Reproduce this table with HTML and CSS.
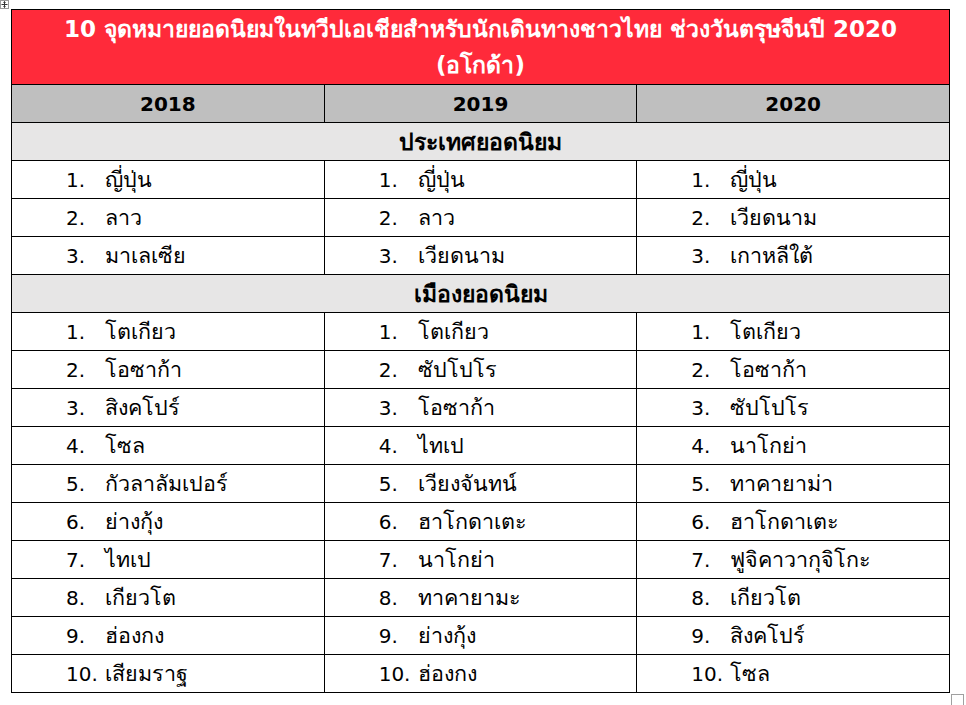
FILE: index.html
```html
<!DOCTYPE html>
<html lang="th">
<head>
<meta charset="utf-8">
<link rel="stylesheet" href="styles.css">
</head>
<body>
<div class="page">
  <div class="move-handle">
    <svg width="9" height="9" viewBox="0 0 9 9"><rect x="0.5" y="0.5" width="8" height="8" fill="#fff" stroke="#9a9a9a"/><path d="M4.5 1.5v6M1.5 4.5h6" stroke="#333" stroke-width="1"/><path d="M4.5 1.5l-1.2 1.2M4.5 1.5l1.2 1.2M4.5 7.5l-1.2-1.2M4.5 7.5l1.2-1.2" stroke="#333" stroke-width="0.8"/></svg>
  </div>
  <table class="tbl">
    <colgroup><col class="c"><col class="c"><col class="c"></colgroup>
    <tr class="title"><td colspan="3">10 จุดหมายยอดนิยมในทวีปเอเชียสำหรับนักเดินทางชาวไทย ช่วงวันตรุษจีนปี 2020<br>(อโกด้า)</td></tr>
    <tr class="years"><td>2018</td><td>2019</td><td>2020</td></tr>
    <tr class="section"><td colspan="3">ประเทศยอดนิยม</td></tr>
    <tr class="row"><td><span class="n">1.</span><span class="t">ญี่ปุ่น</span></td><td><span class="n">1.</span><span class="t">ญี่ปุ่น</span></td><td><span class="n">1.</span><span class="t">ญี่ปุ่น</span></td></tr>
    <tr class="row"><td><span class="n">2.</span><span class="t">ลาว</span></td><td><span class="n">2.</span><span class="t">ลาว</span></td><td><span class="n">2.</span><span class="t">เวียดนาม</span></td></tr>
    <tr class="row"><td><span class="n">3.</span><span class="t">มาเลเซีย</span></td><td><span class="n">3.</span><span class="t">เวียดนาม</span></td><td><span class="n">3.</span><span class="t">เกาหลีใต้</span></td></tr>
    <tr class="section"><td colspan="3">เมืองยอดนิยม</td></tr>
    <tr class="row"><td><span class="n">1.</span><span class="t">โตเกียว</span></td><td><span class="n">1.</span><span class="t">โตเกียว</span></td><td><span class="n">1.</span><span class="t">โตเกียว</span></td></tr>
    <tr class="row"><td><span class="n">2.</span><span class="t">โอซาก้า</span></td><td><span class="n">2.</span><span class="t">ซัปโปโร</span></td><td><span class="n">2.</span><span class="t">โอซาก้า</span></td></tr>
    <tr class="row"><td><span class="n">3.</span><span class="t">สิงคโปร์</span></td><td><span class="n">3.</span><span class="t">โอซาก้า</span></td><td><span class="n">3.</span><span class="t">ซัปโปโร</span></td></tr>
    <tr class="row"><td><span class="n">4.</span><span class="t">โซล</span></td><td><span class="n">4.</span><span class="t">ไทเป</span></td><td><span class="n">4.</span><span class="t">นาโกย่า</span></td></tr>
    <tr class="row"><td><span class="n">5.</span><span class="t">กัวลาลัมเปอร์</span></td><td><span class="n">5.</span><span class="t">เวียงจันทน์</span></td><td><span class="n">5.</span><span class="t">ทาคายาม่า</span></td></tr>
    <tr class="row"><td><span class="n">6.</span><span class="t">ย่างกุ้ง</span></td><td><span class="n">6.</span><span class="t">ฮาโกดาเตะ</span></td><td><span class="n">6.</span><span class="t">ฮาโกดาเตะ</span></td></tr>
    <tr class="row"><td><span class="n">7.</span><span class="t">ไทเป</span></td><td><span class="n">7.</span><span class="t">นาโกย่า</span></td><td><span class="n">7.</span><span class="t">ฟูจิคาวากุจิโกะ</span></td></tr>
    <tr class="row"><td><span class="n">8.</span><span class="t">เกียวโต</span></td><td><span class="n">8.</span><span class="t">ทาคายามะ</span></td><td><span class="n">8.</span><span class="t">เกียวโต</span></td></tr>
    <tr class="row"><td><span class="n">9.</span><span class="t">ฮ่องกง</span></td><td><span class="n">9.</span><span class="t">ย่างกุ้ง</span></td><td><span class="n">9.</span><span class="t">สิงคโปร์</span></td></tr>
    <tr class="row"><td><span class="n">10.</span><span class="t">เสียมราฐ</span></td><td><span class="n">10.</span><span class="t">ฮ่องกง</span></td><td><span class="n">10.</span><span class="t">โซล</span></td></tr>
  </table>
  <div class="end-mark"></div>
</div>
</body>
</html>
```

FILE: styles.css
```css
html, body {
  margin: 0;
  padding: 0;
  background: #fff;
}
.page {
  position: relative;
  width: 966px;
  height: 705px;
  padding: 9px 0 0 11px;
  box-sizing: border-box;
  font-family: "DejaVu Sans", "Noto Sans", sans-serif;
  color: #000;
}
.move-handle {
  position: absolute;
  left: 0;
  top: 0;
  line-height: 0;
}
.tbl {
  border-collapse: collapse;
  width: 939px;
  table-layout: fixed;
}
.tbl td {
  border: 1px solid #000;
  padding: 0;
}
.title td {
  background: #ff2a3a;
  color: #fff;
  font-weight: bold;
  font-size: 23px;
  text-align: center;
  height: 74px;
  line-height: 36px;
}
.years td {
  background: #bfbfbf;
  font-weight: bold;
  font-size: 20px;
  text-align: center;
  height: 37px;
  line-height: 20px;
}
.section td {
  background: #e7e6e6;
  font-weight: bold;
  font-size: 23px;
  text-align: center;
  height: 37px;
  line-height: 20px;
}
.row td {
  font-size: 20px;
  height: 37px;
  line-height: 20px;
  padding-left: 54px;
  white-space: nowrap;
  vertical-align: middle;
}
.n {
  display: inline-block;
  width: 39px;
}
.t {
  font-size: 21.5px;
  line-height: 20px;
}
.end-mark {
  position: absolute;
  left: 951px;
  top: 694px;
  width: 11px;
  height: 11px;
  border-left: 1px solid #a0a0a0;
  border-top: 1px solid #a0a0a0;
  border-right: 1px solid #a0a0a0;
}
```
